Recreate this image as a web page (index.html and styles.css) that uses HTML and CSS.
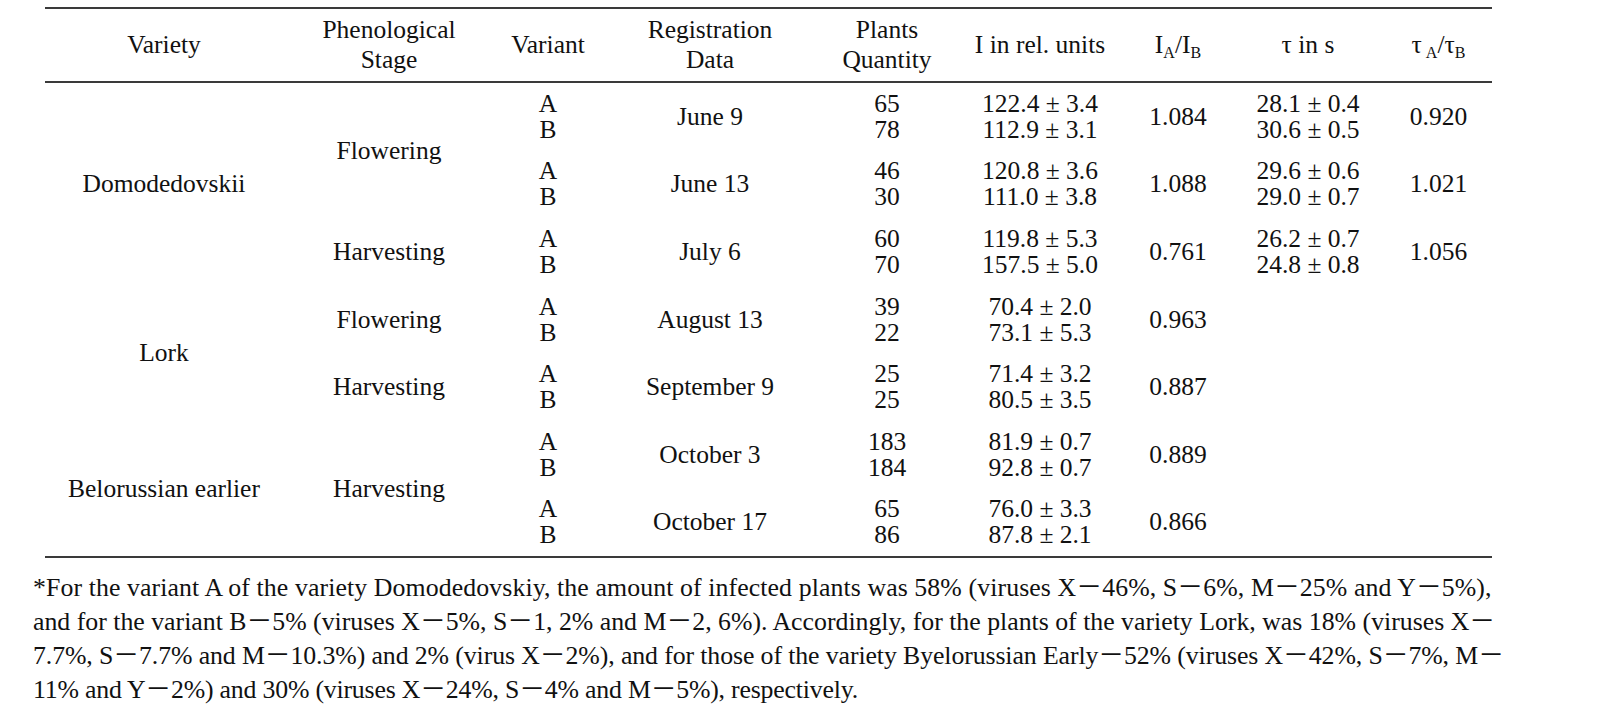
FILE: index.html
```html
<!DOCTYPE html>
<html>
<head>
<meta charset="utf-8">
<link rel="stylesheet" href="styles.css">
</head>
<body>
<div class="page">
<table class="data">
<colgroup>
<col class="c-variety"><col class="c-stage"><col class="c-variant"><col class="c-date"><col class="c-qty"><col class="c-i"><col class="c-iab"><col class="c-tau"><col class="c-tauab">
</colgroup>
<thead>
<tr>
<th>Variety</th>
<th>Phenological<br>Stage</th>
<th>Variant</th>
<th>Registration<br>Data</th>
<th>Plants<br>Quantity</th>
<th>I in rel. units</th>
<th>I<sub>A</sub>/I<sub>B</sub></th>
<th>τ in s</th>
<th>τ<sub class="sp">A</sub>/τ<sub>B</sub></th>
</tr>
</thead>
<tbody>
<tr>
<td rowspan="3">Domodedovskii</td>
<td rowspan="2">Flowering</td>
<td>A<br>B</td><td>June 9</td><td>65<br>78</td><td>122.4 ± 3.4<br>112.9 ± 3.1</td><td>1.084</td><td>28.1 ± 0.4<br>30.6 ± 0.5</td><td>0.920</td>
</tr>
<tr>
<td>A<br>B</td><td>June 13</td><td>46<br>30</td><td>120.8 ± 3.6<br>111.0 ± 3.8</td><td>1.088</td><td>29.6 ± 0.6<br>29.0 ± 0.7</td><td>1.021</td>
</tr>
<tr>
<td>Harvesting</td>
<td>A<br>B</td><td>July 6</td><td>60<br>70</td><td>119.8 ± 5.3<br>157.5 ± 5.0</td><td>0.761</td><td>26.2 ± 0.7<br>24.8 ± 0.8</td><td>1.056</td>
</tr>
<tr>
<td rowspan="2">Lork</td>
<td>Flowering</td>
<td>A<br>B</td><td>August 13</td><td>39<br>22</td><td>70.4 ± 2.0<br>73.1 ± 5.3</td><td>0.963</td><td></td><td></td>
</tr>
<tr>
<td>Harvesting</td>
<td>A<br>B</td><td>September 9</td><td>25<br>25</td><td>71.4 ± 3.2<br>80.5 ± 3.5</td><td>0.887</td><td></td><td></td>
</tr>
<tr>
<td rowspan="2">Belorussian earlier</td>
<td rowspan="2">Harvesting</td>
<td>A<br>B</td><td>October 3</td><td>183<br>184</td><td>81.9 ± 0.7<br>92.8 ± 0.7</td><td>0.889</td><td></td><td></td>
</tr>
<tr>
<td>A<br>B</td><td>October 17</td><td>65<br>86</td><td>76.0 ± 3.3<br>87.8 ± 2.1</td><td>0.866</td><td></td><td></td>
</tr>
</tbody>
</table>
<p class="note"><span class="l1">*For the variant A of the variety Domodedovskiy, the amount of infected plants was 58% (viruses X<span class="d">－</span>46%, S<span class="d">－</span>6%, M<span class="d">－</span>25% and Y<span class="d">－</span>5%),</span><br>and for the variant B<span class="d">－</span>5% (viruses X<span class="d">－</span>5%, S<span class="d">－</span>1, 2% and M<span class="d">－</span>2, 6%). Accordingly, for the plants of the variety Lork, was 18% (viruses X<span class="d">－</span><br><span class="l3">7.7%, S<span class="d">－</span>7.7% and M<span class="d">－</span>10.3%) and 2% (virus X<span class="d">－</span>2%), and for those of the variety Byelorussian Early<span class="d">－</span>52% (viruses X<span class="d">－</span>42%, S<span class="d">－</span>7%, M<span class="d">－</span></span><br><span class="l4">11% and Y<span class="d">－</span>2%) and 30% (viruses X<span class="d">－</span>24%, S<span class="d">－</span>4% and M<span class="d">－</span>5%), respectively.</span></p>
</div>
</body>
</html>
```
FILE: styles.css
```css
body {
  margin: 0;
  background: #ffffff;
  color: #111111;
  font-family: "Liberation Serif", "Times New Roman", serif;
}

.page {
  padding-top: 7px;
}

.data {
  margin-left: 45px;
  width: 1447px;
  border-collapse: collapse;
  table-layout: fixed;
  font-size: 25.5px;
}

.c-variety { width: 238px; }
.c-stage { width: 212px; }
.c-variant { width: 106px; }
.c-date { width: 218px; }
.c-qty { width: 136px; }
.c-i { width: 170px; }
.c-iab { width: 106px; }
.c-tau { width: 154px; }
.c-tauab { width: 107px; }

.data thead th {
  font-weight: normal;
  height: 72px;
  padding: 0;
  line-height: 30px;
  text-align: center;
  vertical-align: middle;
  border-top: 2px solid #3a3a3a;
  border-bottom: 2px solid #3a3a3a;
}

.data sub {
  font-size: 16px;
  vertical-align: -5px;
  line-height: 0;
}

.data sub.sp {
  margin-left: 4px;
}

.data tbody {
  border-bottom: 2px solid #3a3a3a;
}

.data tbody td {
  height: 67.6px;
  padding: 0;
  line-height: 26px;
  text-align: center;
  vertical-align: middle;
}

.note {
  margin: 11px 0 0 33px;
  font-size: 25.8px;
  line-height: 31px;
  white-space: nowrap;
}

.note .l1 {
  letter-spacing: 0.1px;
}

.note .l3 {
  letter-spacing: -0.1px;
}

.note .l4 {
  letter-spacing: -0.2px;
}

.note .d {
  font-family: "Noto Sans CJK SC", sans-serif;
}
```
